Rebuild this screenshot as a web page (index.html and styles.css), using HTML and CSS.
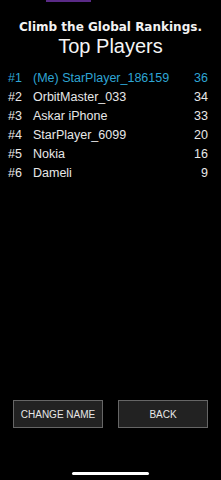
FILE: index.html
```html
<!DOCTYPE html>
<html lang="en">
<head>
  <meta charset="UTF-8" />
  <meta name="viewport" content="width=device-width, initial-scale=1" />
  <title>Top Players</title>
  <link rel="stylesheet" href="styles.css">
</head>
<body>
  <div class="screen">
    <div class="topline"></div>

    <!-- Cabecalho -->
    <div class="header">
      <p class="subtitle">Climb the Global Rankings.</p>
      <h1>Top Players</h1>
    </div>

    <!-- Ranking -->
    <div class="ranking">
      <div class="row me"><span class="pos">#1</span><span class="name">(Me) StarPlayer_186159</span><span class="score">36</span></div>
      <div class="row"><span class="pos">#2</span><span class="name">OrbitMaster_033</span><span class="score">34</span></div>
      <div class="row"><span class="pos">#3</span><span class="name">Askar iPhone</span><span class="score">33</span></div>
      <div class="row"><span class="pos">#4</span><span class="name">StarPlayer_6099</span><span class="score">20</span></div>
      <div class="row"><span class="pos">#5</span><span class="name">Nokia</span><span class="score">16</span></div>
      <div class="row"><span class="pos">#6</span><span class="name">Dameli</span><span class="score">9</span></div>
    </div>

    <div class="actions">
      <button>CHANGE NAME</button>
      <button>BACK</button>
    </div>

    <div class="home-bar"></div>
  </div>
</body>
</html>
```

FILE: styles.css
```css
body {
  margin: 0;
  padding: 0;
  background: #000;
  color: #eee;
  font-family: 'Liberation Sans', Arial, sans-serif;
}

.screen {
  width: 221px;
  height: 480px;
  display: flex;
  flex-direction: column;
  overflow: hidden;
}

.topline {
  width: 45px;
  height: 2px;
  margin-left: 46px;
  background: #5a2a86;
}

.header {
  text-align: center;
  padding-top: 18px;
}

.subtitle {
  margin: 0;
  font-family: 'DejaVu Sans', Verdana, sans-serif;
  font-weight: bold;
  font-size: 12px;
  line-height: 14px;
  color: #f2f2f2;
}

.header h1 {
  margin: 0;
  font-weight: normal;
  font-size: 20px;
  line-height: 24px;
  color: #f5f5f5;
}

.ranking {
  margin-top: 11px;
  padding: 0 13px 0 8px;
}

.row {
  display: flex;
  font-size: 12.5px;
  line-height: 19px;
  color: #e8e8e8;
}

.row .pos {
  width: 25px;
}

.row .name {
  flex: 1;
}

.row.me {
  color: #2ea5d4;
}

.actions {
  margin-top: auto;
  display: grid;
  grid-template-columns: 1fr 1fr;
  gap: 15px;
  padding: 0 13px;
}

.actions button {
  height: 28px;
  background: #222;
  border: 1px solid #666;
  color: #e6e6e6;
  font-family: 'Liberation Sans', Arial, sans-serif;
  font-size: 10px;
  padding: 0;
}

.home-bar {
  width: 77px;
  height: 3px;
  border-radius: 2px;
  background: #fff;
  margin: 44px auto 5px 72px;
}
```
